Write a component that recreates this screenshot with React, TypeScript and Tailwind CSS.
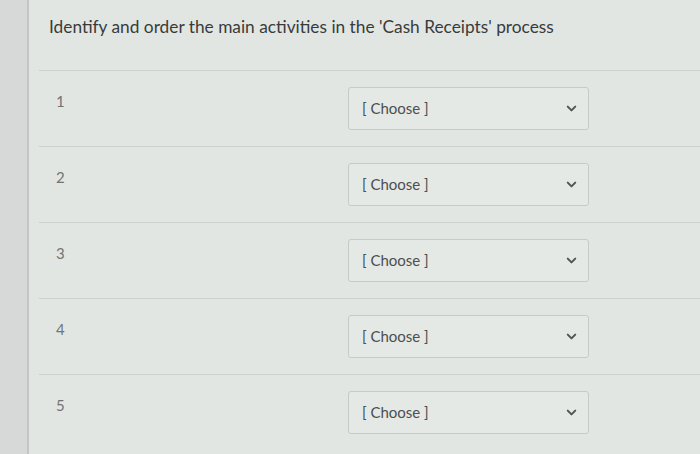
import { ChevronDown } from 'lucide-react';

const rows = [1, 2, 3, 4, 5];

export default function App() {
  return (
    <div className="flex h-[454px] w-[700px] overflow-hidden bg-[#e2e6e3] font-['Lato','Open_Sans',sans-serif]">
      {/* left edge strip */}
      <div className="w-[29px] shrink-0 border-r-2 border-[#c3c6c5] bg-[#d6d9d8]" />

      <div className="flex flex-1 flex-col">
        <div className="flex h-[70px] items-start pl-[20px] pt-[14px]">
          <h1 className="text-[17.3px] leading-[26px] text-[#383b3c]">
            Identify and order the main activities in the 'Cash Receipts' process
          </h1>
        </div>

        <div className="ml-[10px] flex flex-col">
          {rows.map((n) => (
            <div key={n} className="flex h-[76px] border-t border-[#cdd1cf]">
              <div className="w-[309px] pl-[17px] pt-[20px] text-[15px] leading-[20px] text-[#707475]">{n}</div>
              <div className="pt-[16px]">
                <div className="flex h-[43px] w-[241px] items-center justify-between rounded-[3px] border border-[#c6cac8] bg-[#e5e9e6] pl-[13px] pr-[9px]">
                  <span className="text-[15px] text-[#4b4f50]">[ Choose ]</span>
                  <ChevronDown size={15} strokeWidth={3.2} className="text-[#505455]" />
                </div>
              </div>
            </div>
          ))}
        </div>
      </div>
    </div>
  );
}
